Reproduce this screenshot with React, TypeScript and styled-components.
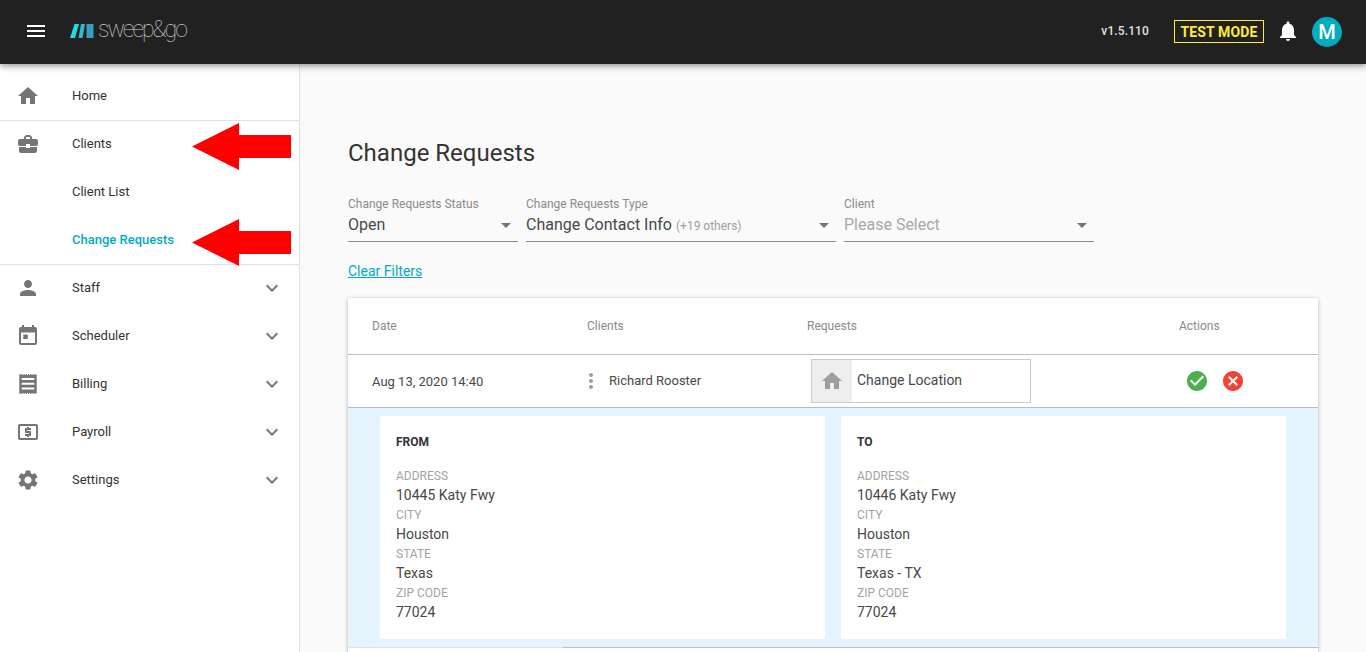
import styled, { createGlobalStyle } from "styled-components";
import {
  MdMenu,
  MdNotifications,
  MdHome,
  MdBusinessCenter,
  MdPerson,
  MdOutlineLocalAtm,
  MdSettings,
  MdKeyboardArrowDown,
  MdArrowDropDown,
  MdMoreVert,
  MdCheckCircle,
  MdCancel,
} from "react-icons/md";

const GlobalStyle = createGlobalStyle`
  html, body {
    margin: 0;
    padding: 0;
    height: 100%;
    overflow: hidden;
  }
  body {
    font-family: Roboto, "Liberation Sans", sans-serif;
    color: #333;
    background: #fafafa;
  }
  * {
    box-sizing: border-box;
  }
`;

const Page = styled.div`
  height: 100vh;
  display: flex;
  flex-direction: column;
  overflow: hidden;
`;

const Header = styled.header`
  position: relative;
  z-index: 2;
  flex: 0 0 64px;
  display: flex;
  align-items: center;
  padding-left: 24px;
  padding-right: 24px;
  background: #212121;
  box-shadow: 0 2px 4px -1px rgba(0, 0, 0, 0.2), 0 4px 5px 0 rgba(0, 0, 0, 0.14), 0 1px 10px 0 rgba(0, 0, 0, 0.12);
  color: #fff;
`;

const Burger = styled.div`
  display: flex;
  margin-top: -2px;
  margin-right: 22px;
  font-size: 24px;
`;

const Logo = styled.div`
  display: flex;
  align-items: center;
  gap: 4px;
  margin-top: -3px;
`;

const LogoText = styled.span`
  font-family: Roboto, sans-serif;
  font-weight: 100;
  font-size: 23px;
  line-height: 24px;
  color: #d0d0d0;
  letter-spacing: -2px;
  margin-top: -2px;
`;

const HeaderRight = styled.div`
  margin-left: auto;
  display: flex;
  align-items: center;
`;

const Version = styled.span`
  font-size: 12px;
  font-weight: 500;
  letter-spacing: 0.01em;
  color: #e0e0e0;
  margin-right: 25px;
  margin-top: -2px;
`;

const TestMode = styled.span`
  height: 23px;
  width: 90px;
  display: flex;
  align-items: center;
  justify-content: center;
  border: 1px solid #ffeb3b;
  font-size: 14px;
  font-weight: 700;
  letter-spacing: 0.01em;
  color: #ffeb3b;
  margin-right: 12px;
  margin-top: -1px;
`;

const Bell = styled.span`
  display: flex;
  font-size: 24px;
  margin-right: 12px;
  margin-top: -2px;
`;

const Avatar = styled.span`
  width: 30px;
  height: 30px;
  border-radius: 50%;
  background: #00acc1;
  display: flex;
  align-items: center;
  justify-content: center;
  font-size: 20px;
  font-weight: 500;
  color: #fff;
`;

const Body = styled.div`
  flex: 1;
  display: flex;
  min-height: 0;
`;

const Sidebar = styled.nav`
  flex: 0 0 300px;
  padding-top: 8px;
  background: #fff;
  border-right: 1px solid #e0e0e0;
`;

const NavItem = styled.div<{ $divider?: boolean }>`
  position: relative;
  height: 48px;
  display: flex;
  align-items: center;
  padding-left: 16px;
  padding-right: 15px;
  padding-bottom: 1px;
  box-shadow: ${({ $divider }) => ($divider ? "0 1px 0 #e0e0e0" : "none")};
`;

const NavIcon = styled.span`
  flex: 0 0 56px;
  display: flex;
  font-size: 24px;
  color: #757575;
`;

const NavLabel = styled.span<{ $active?: boolean }>`
  flex: 1;
  font-size: 13px;
  font-weight: ${({ $active }) => ($active ? 500 : 400)};
  color: ${({ $active }) => ($active ? "#00acc1" : "#333")};
`;

const SubLabel = styled(NavLabel)`
  padding-left: 56px;
`;

const Chevron = styled.span`
  display: flex;
  font-size: 24px;
  color: #757575;
`;

// red annotation arrows laid over the menu
const Arrow = styled.svg`
  position: absolute;
  left: 192px;
  top: 3px;
  width: 99px;
  height: 47px;
`;

const Main = styled.main`
  flex: 1;
  min-width: 0;
  padding: 73px 48px 0;
  background: #fafafa;
`;

const Title = styled.h1`
  margin: 0;
  font-size: 24px;
  line-height: 32px;
  font-weight: 400;
  color: #333;
`;

const Filters = styled.div`
  display: flex;
  gap: 8px;
  margin-top: 28px;
`;

const Filter = styled.div<{ $width: number }>`
  width: ${({ $width }) => $width}px;
`;

const FilterLabel = styled.div`
  font-size: 12px;
  line-height: 14px;
  color: #8a8a8a;
`;

const Select = styled.div`
  height: 31px;
  display: flex;
  align-items: center;
  padding-bottom: 3px;
  border-bottom: 1px solid #8c8c8c;
`;

const SelectValue = styled.span<{ $placeholder?: boolean }>`
  flex: 1;
  font-size: 16px;
  color: ${({ $placeholder }) => ($placeholder ? "#a8a8a8" : "#484848")};
`;

const SelectHint = styled.span`
  margin-left: 4px;
  font-size: 12px;
  color: #9e9e9e;
`;

const Caret = styled.span`
  display: flex;
  font-size: 24px;
  color: #757575;
`;

const ClearLink = styled.a`
  display: inline-block;
  margin-top: 19px;
  font-size: 14px;
  line-height: 20px;
  color: #00acc1;
  text-decoration: underline;
`;

const Card = styled.section`
  margin-top: 17px;
  background: #fff;
  border-radius: 2px;
  box-shadow: 0 1px 4px rgba(0, 0, 0, 0.3);
  padding-bottom: 60px;
`;

const Row = styled.div`
  display: grid;
  grid-template-columns: 215px 220px 372px 1fr;
  align-items: center;
  padding-left: 24px;
`;

const HeadRow = styled(Row)`
  height: 57px;
  border-bottom: 1px solid #bdbdbd;
`;

const HeadCell = styled.div`
  font-size: 12px;
  color: #8a8a8a;
`;

const DataRow = styled(Row)`
  height: 53px;
  border-bottom: 1px solid #b0bec5;
`;

const Cell = styled.div`
  display: flex;
  align-items: center;
  font-size: 13px;
  color: #484848;
`;

const More = styled.span`
  display: flex;
  margin-left: -8px;
  margin-right: 6px;
  font-size: 24px;
  color: #9e9e9e;
`;

const ClientName = styled.span`
  margin-top: -2px;
`;

const RequestBox = styled.div`
  width: 220px;
  height: 44px;
  margin-left: 4px;
  display: flex;
  align-items: center;
  border: 1px solid #ccc;
  background: #fff;
`;

const RequestIcon = styled.span`
  flex: 0 0 40px;
  height: 100%;
  display: flex;
  align-items: center;
  justify-content: center;
  background: #eee;
  font-size: 24px;
  color: #9e9e9e;
`;

const RequestText = styled.span`
  margin-left: 5px;
  margin-top: -2px;
  font-size: 14px;
  color: #484848;
`;

const Actions = styled.div`
  display: flex;
  gap: 12px;
  margin-left: 6px;
`;

const ActionIcon = styled.span<{ $color: string }>`
  display: flex;
  font-size: 24px;
  color: ${({ $color }) => $color};
`;

const Expanded = styled.div`
  display: flex;
  gap: 16px;
  padding: 8px 32px;
  background: #e5f3fd;
`;

const Panel = styled.div`
  flex: 1;
  padding: 16px;
  background: #fff;
  border-radius: 2px;
`;

const PanelTitle = styled.div`
  padding-top: 1px;
  margin-bottom: 16px;
  font-size: 12px;
  line-height: 18px;
  font-weight: 700;
  color: #333;
`;

const FieldLabel = styled.div`
  font-size: 12px;
  line-height: 18px;
  color: #a3a3a3;
`;

const FieldValue = styled.div`
  font-size: 14px;
  line-height: 21px;
  color: #484848;
`;

const BottomEdge = styled.div`
  display: flex;
  height: 1px;
  background: #bdbdbd;
`;

const BottomEdgeLight = styled.div`
  width: 215px;
  background: #dce4ea;
`;

const LogoMark = () => (
  <svg width="24" height="14" viewBox="0 0 24 14">
    <polygon points="0,14 5,14 9,0 4.5,0" fill="#22dbe0" />
    <polygon points="8.5,14 12.5,14 15,0 11,0" fill="#2bbcd0" />
    <polygon points="16.5,0 23.5,0 23.5,14 16.5,14" fill="#3a9fbf" />
  </svg>
);

const CalendarIcon = () => (
  <svg width="1em" height="1em" viewBox="0 0 24 24">
    <path
      fill="currentColor"
      fillRule="evenodd"
      d="M5 3h1V1h2v2h8V1h2v2h1a2 2 0 0 1 2 2v14a2 2 0 0 1-2 2H5a2 2 0 0 1-2-2V5a2 2 0 0 1 2-2zM5 8.5V19h14V8.5zM7.3 10.5h4.5v4.5H7.3z"
    />
  </svg>
);

// receipt with a perforated top and bottom edge
const ReceiptIcon = () => (
  <svg width="1em" height="1em" viewBox="0 0 24 24">
    <rect x="3.3" y="3" width="17.4" height="18" fill="currentColor" />
    <path d="M3.3 2.5h17.4M3.3 21.5h17.4" stroke="currentColor" strokeWidth="1" strokeDasharray="1.2 1" />
    <path d="M5.7 7h12.6M5.7 11.7h12.6M5.7 16.5h12.6" stroke="#fff" strokeWidth="2" />
  </svg>
);

const RedArrow = () => (
  <Arrow viewBox="0 0 99 47">
    <polygon points="0,23.5 47,0 47,12 99,12 99,35 47,35 47,47" fill="#ff0000" />
  </Arrow>
);

const fields = (state: string, address: string) => [
  { label: "ADDRESS", value: address },
  { label: "CITY", value: "Houston" },
  { label: "STATE", value: state },
  { label: "ZIP CODE", value: "77024" },
];

const menu = [
  { label: "Staff", icon: <MdPerson /> },
  { label: "Scheduler", icon: <CalendarIcon /> },
  { label: "Billing", icon: <ReceiptIcon /> },
  { label: "Payroll", icon: <MdOutlineLocalAtm /> },
  { label: "Settings", icon: <MdSettings /> },
];

const panels = [
  { title: "FROM", rows: fields("Texas", "10445 Katy Fwy") },
  { title: "TO", rows: fields("Texas - TX", "10446 Katy Fwy") },
];

const App = () => {
  return (
    <Page>
      <GlobalStyle />
      <Header>
        <Burger>
          <MdMenu />
        </Burger>
        <Logo>
          <LogoMark />
          <LogoText>sweep&amp;go</LogoText>
        </Logo>
        <HeaderRight>
          <Version>v1.5.110</Version>
          <TestMode>TEST MODE</TestMode>
          <Bell>
            <MdNotifications />
          </Bell>
          <Avatar>M</Avatar>
        </HeaderRight>
      </Header>
      <Body>
        <Sidebar>
          <NavItem $divider>
            <NavIcon>
              <MdHome />
            </NavIcon>
            <NavLabel>Home</NavLabel>
          </NavItem>
          <NavItem>
            <NavIcon>
              <MdBusinessCenter />
            </NavIcon>
            <NavLabel>Clients</NavLabel>
            <RedArrow />
          </NavItem>
          <NavItem>
            <SubLabel>Client List</SubLabel>
          </NavItem>
          <NavItem $divider>
            <SubLabel $active>Change Requests</SubLabel>
            <RedArrow />
          </NavItem>
          {menu.map((item) => (
            <NavItem key={item.label}>
              <NavIcon>{item.icon}</NavIcon>
              <NavLabel>{item.label}</NavLabel>
              <Chevron>
                <MdKeyboardArrowDown />
              </Chevron>
            </NavItem>
          ))}
        </Sidebar>
        <Main>
          <Title>Change Requests</Title>
          <Filters>
            <Filter $width={170}>
              <FilterLabel>Change Requests Status</FilterLabel>
              <Select>
                <SelectValue>Open</SelectValue>
                <Caret>
                  <MdArrowDropDown />
                </Caret>
              </Select>
            </Filter>
            <Filter $width={310}>
              <FilterLabel>Change Requests Type</FilterLabel>
              <Select>
                <SelectValue>
                  Change Contact Info<SelectHint>(+19 others)</SelectHint>
                </SelectValue>
                <Caret>
                  <MdArrowDropDown />
                </Caret>
              </Select>
            </Filter>
            <Filter $width={250}>
              <FilterLabel>Client</FilterLabel>
              <Select>
                <SelectValue $placeholder>Please Select</SelectValue>
                <Caret>
                  <MdArrowDropDown />
                </Caret>
              </Select>
            </Filter>
          </Filters>
          <ClearLink>Clear Filters</ClearLink>
          <Card>
            <HeadRow>
              <HeadCell>Date</HeadCell>
              <HeadCell>Clients</HeadCell>
              <HeadCell>Requests</HeadCell>
              <HeadCell>Actions</HeadCell>
            </HeadRow>
            <DataRow>
              <Cell>Aug 13, 2020 14:40</Cell>
              <Cell>
                <More>
                  <MdMoreVert />
                </More>
                <ClientName>Richard Rooster</ClientName>
              </Cell>
              <Cell>
                <RequestBox>
                  <RequestIcon>
                    <MdHome />
                  </RequestIcon>
                  <RequestText>Change Location</RequestText>
                </RequestBox>
              </Cell>
              <Actions>
                <ActionIcon $color="#4caf50">
                  <MdCheckCircle />
                </ActionIcon>
                <ActionIcon $color="#f44336">
                  <MdCancel />
                </ActionIcon>
              </Actions>
            </DataRow>
            <Expanded>
              {panels.map((panel) => (
                <Panel key={panel.title}>
                  <PanelTitle>{panel.title}</PanelTitle>
                  {panel.rows.map((row) => (
                    <div key={row.label}>
                      <FieldLabel>{row.label}</FieldLabel>
                      <FieldValue>{row.value}</FieldValue>
                    </div>
                  ))}
                </Panel>
              ))}
            </Expanded>
            <BottomEdge>
              <BottomEdgeLight />
            </BottomEdge>
          </Card>
        </Main>
      </Body>
    </Page>
  );
};

export default App;
